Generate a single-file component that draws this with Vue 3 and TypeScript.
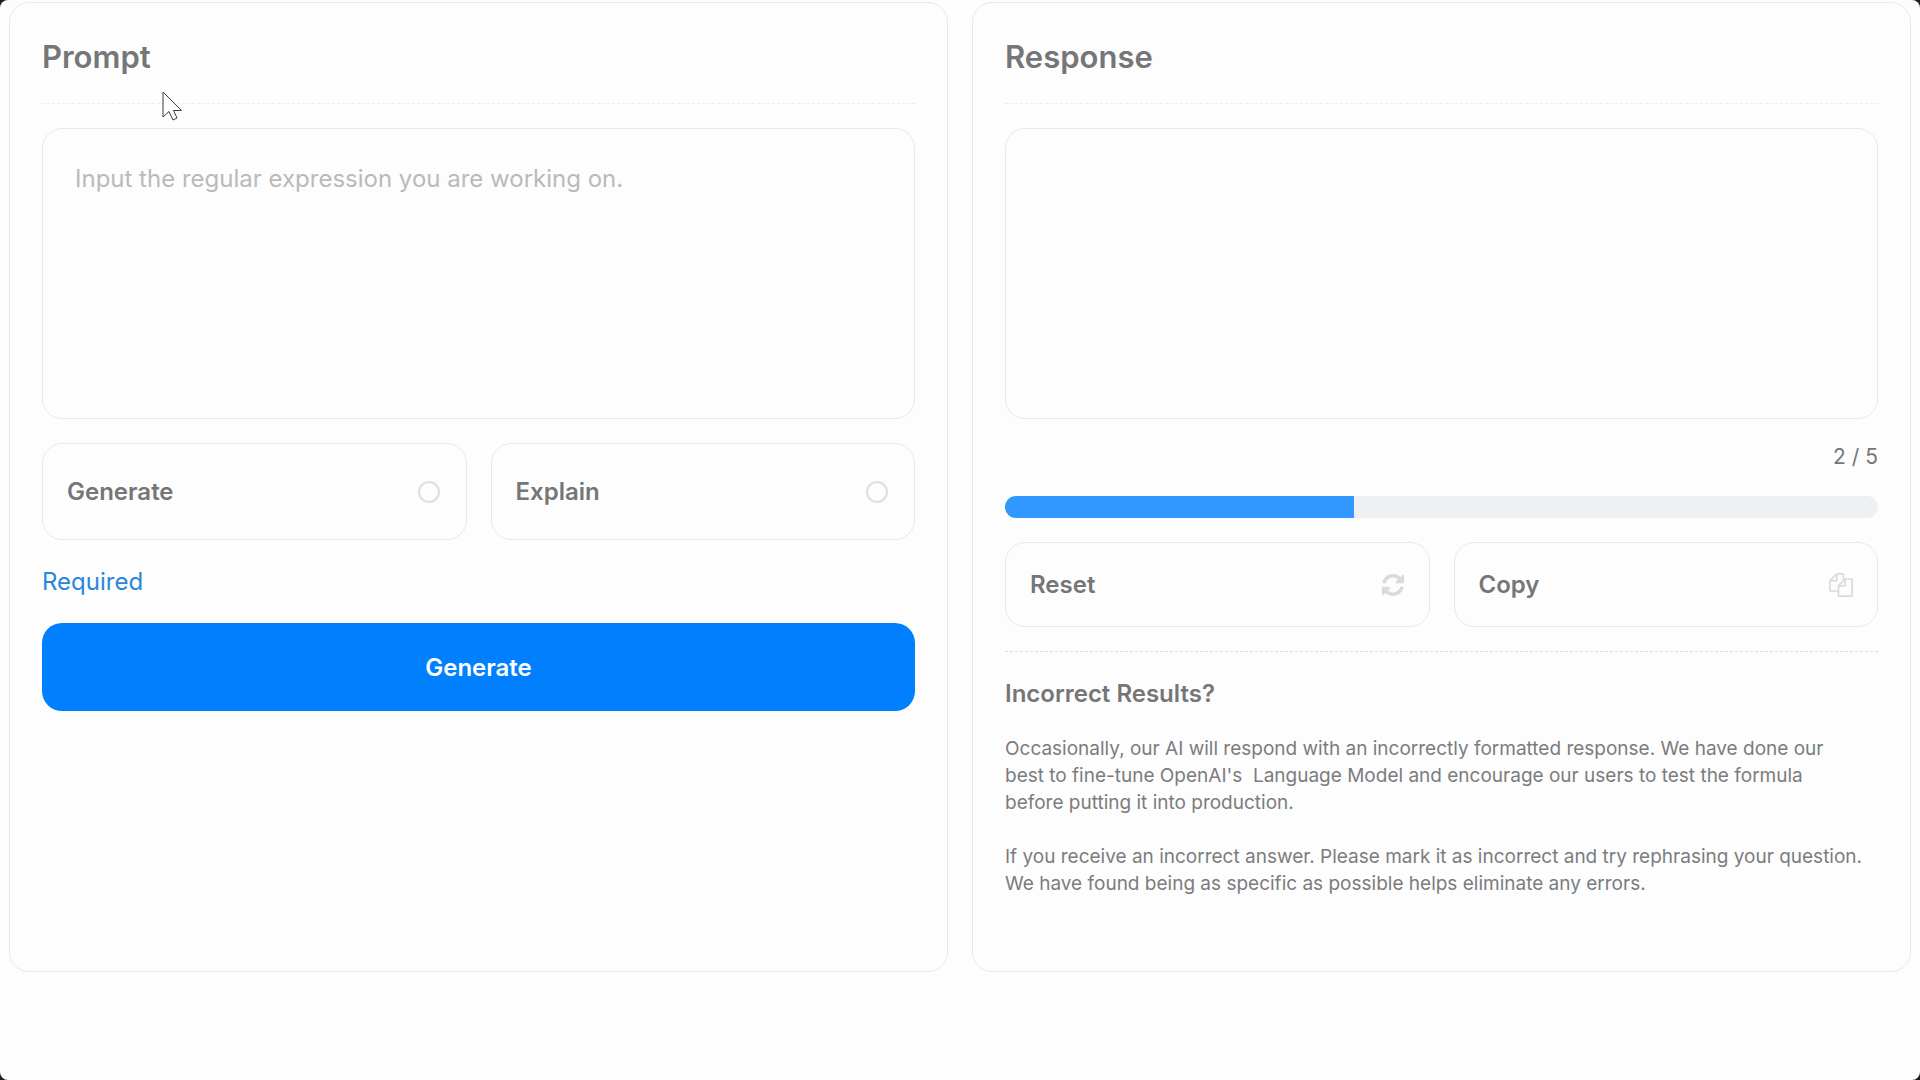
<script setup lang="ts">
import { ref } from 'vue'

type Mode = 'generate' | 'explain'

const modes: { id: Mode; label: string }[] = [
  { id: 'generate', label: 'Generate' },
  { id: 'explain', label: 'Explain' },
]

const prompt = ref('')
const response = ref('')
const mode = ref<Mode | null>(null)
const used = ref(2)
const limit = 5
</script>

<template>
  <main class="page">
    <form class="card" @submit.prevent>
      <h1 class="title">Prompt</h1>
      <hr class="divider" />
      <textarea
        v-model="prompt"
        class="box"
        aria-label="Prompt"
        placeholder="Input the regular expression you are working on."
      ></textarea>
      <div class="pair">
        <label v-for="m in modes" :key="m.id" class="option tall">
          <span>{{ m.label }}</span>
          <input v-model="mode" type="radio" name="mode" :value="m.id" />
        </label>
      </div>
      <p class="required">Required</p>
      <button type="submit" class="submit">Generate</button>
    </form>

    <section class="card">
      <h1 class="title">Response</h1>
      <hr class="divider" />
      <textarea v-model="response" class="box" aria-label="Response" readonly></textarea>
      <label class="count" for="usage">{{ used }} / {{ limit }}</label>
      <progress id="usage" class="usage" :value="used" :max="limit"></progress>
      <div class="pair">
        <button type="button" class="option">
          <span>Reset</span>
          <svg class="icon" viewBox="-64 -64 1664 1664" aria-hidden="true">
            <path
              d="M1511 928q0 5-1 7-64 268-268 434.500T764 1536q-146 0-282.500-55T238 1324l-129 129q-19 19-45 19t-45-19-19-45V960q0-26 19-45t45-19h448q26 0 45 19t19 45-19 45l-137 137q71 66 161 102t187 36q134 0 250-65t186-179q11-17 53-117 8-23 30-23h192q13 0 22.500 9.500t9.500 22.500zm25-800v448q0 26-19 45t-45 19h-448q-26 0-45-19t-19-45 19-45l138-138Q969 256 768 256q-134 0-250 65T332 500q-11 17-53 117-8 23-30 23H50q-13 0-22.500-9.500T18 608v-7q65-268 270-434.500T768 0q146 0 284 55.500T1297 212l130-129q19-19 45-19t45 19 19 45z"
            />
          </svg>
        </button>
        <button type="button" class="option">
          <span>Copy</span>
          <svg class="icon" viewBox="0 0 1792 1792" aria-hidden="true">
            <path
              d="M1696 384q40 0 68 28t28 68v1216q0 40-28 68t-68 28H736q-40 0-68-28t-28-68v-288H96q-40 0-68-28t-28-68V640q0-40 20-88t48-76L476 68q28-28 76-48t88-20h416q40 0 68 28t28 68v328q68-40 128-40h416zm-544 213L853 896h299V597zM512 213L213 512h299V213zm196 647l316-316V128H640v416q0 40-28 68t-68 28H128v640h512v-256q0-40 20-88t48-76zm956 804V512h-384v416q0 40-28 68t-68 28H768v640h896z"
            />
          </svg>
        </button>
      </div>
      <hr class="divider lower" />
      <h2 class="subtitle">Incorrect Results?</h2>
      <p class="note">
        Occasionally, our AI will respond with an incorrectly formatted response. We have done our<br />
        best to fine-tune OpenAI's&nbsp; Language Model and encourage our users to test the formula<br />
        before putting it into production.
      </p>
      <p class="note">
        If you receive an incorrect answer. Please mark it as incorrect and try rephrasing your
        question. We have found being as specific as possible helps eliminate any errors.
      </p>
    </section>

    <svg class="pointer" viewBox="0 0 20 30" aria-hidden="true">
      <path d="M1 1V26L7 20.500L11 29L15 27L11.500 19.500H19.500Z" />
    </svg>
  </main>
</template>

<style>
body {
  margin: 0;
  background: #1c1c1e;
}
</style>

<style scoped>
.page {
  position: relative;
  box-sizing: border-box;
  display: grid;
  grid-template-columns: 1fr 1fr;
  align-items: start;
  gap: 24px;
  min-height: 100vh;
  padding: 2px 9px 108px;
  border-radius: 8px;
  background: #fdfdfd;
  color: #757678;
  font-family: Inter, 'Liberation Sans', sans-serif;
  font-size: 24px;
  line-height: 35px;
}

.card {
  box-sizing: border-box;
  display: flex;
  flex-direction: column;
  align-self: stretch;
  min-height: 970px;
  padding: 32px;
  border: 1px solid #e9e9ea;
  border-radius: 20px;
}

.title {
  margin: 0;
  font-size: 31px;
  font-weight: 600;
  line-height: 44px;
}

.divider {
  width: 100%;
  margin: 24px 0;
  border: 0;
  border-top: 1px dashed #ececed;
}

.box {
  box-sizing: border-box;
  display: block;
  width: 100%;
  height: 291px;
  margin: 0 0 24px;
  padding: 32px;
  border: 1px solid #e9e9ea;
  border-radius: 20px;
  outline: none;
  background: transparent;
  color: inherit;
  font: inherit;
  resize: none;
}

.box::placeholder {
  color: #b9babb;
  opacity: 1;
}

.pair {
  display: grid;
  grid-template-columns: 1fr 1fr;
  gap: 24px;
}

.option {
  box-sizing: border-box;
  display: flex;
  align-items: center;
  justify-content: space-between;
  height: 85px;
  padding: 0 24px;
  border: 1px solid #e9e9ea;
  border-radius: 20px;
  background: transparent;
  color: inherit;
  font: inherit;
  font-weight: 600;
}

.tall {
  height: 97px;
}

.option input {
  width: 22px;
  height: 22px;
  margin: 0 2px;
  border: 2px solid #dededf;
  border-radius: 50%;
  appearance: none;
}

.option input:checked {
  border: 7px solid #0080ff;
}

.icon {
  width: 24px;
  height: 24px;
  fill: #d9dadb;
}

.required {
  margin: 24px 0;
  color: #2a86dc;
}

.submit {
  height: 88px;
  border: 0;
  border-radius: 20px;
  background: #0080ff;
  color: #fdfdfd;
  font: inherit;
  font-weight: 600;
}

.count {
  align-self: flex-end;
  margin-bottom: 25px;
  font-size: 21px;
  line-height: 28px;
}

.usage {
  width: 100%;
  height: 22px;
  margin-bottom: 24px;
  border: 0;
  border-radius: 11px;
  overflow: hidden;
  appearance: none;
}

.usage::-webkit-progress-bar {
  background: #eff0f2;
}

.usage::-webkit-progress-value {
  background: #3098ff;
}

.lower {
  border-color: #dededf;
}

.subtitle {
  margin: 0 0 24px;
  font-size: 24px;
  font-weight: 600;
}

.note {
  margin: 0 0 27px;
  color: #7b7c7e;
  font-size: 19px;
  line-height: 27px;
}

.pointer {
  position: absolute;
  top: 91px;
  left: 162px;
  width: 20px;
  height: 30px;
  fill: #fdfdfd;
  stroke: #3c3c3e;
}
</style>
